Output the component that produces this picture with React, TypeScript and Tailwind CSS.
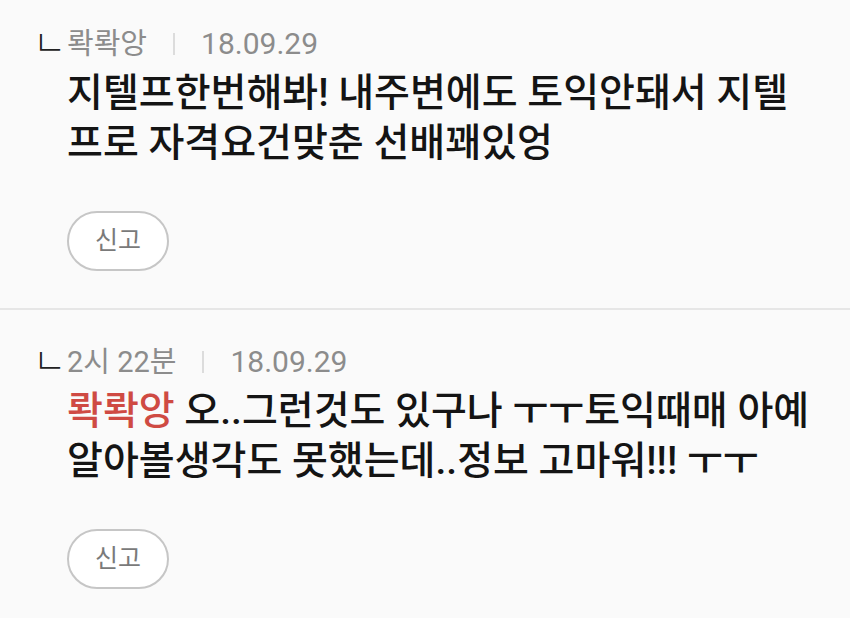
const FONT = { fontFamily: '"Roboto", "Noto Sans CJK KR", sans-serif' };

interface IReply {
  meta: string;
  date: string;
  mention?: string;
  lines: string[];
}

const replies: IReply[] = [
  {
    meta: "롹롹앙",
    date: "18.09.29",
    lines: ["지텔프한번해봐! 내주변에도 토익안돼서 지텔", "프로 자격요건맞춘 선배꽤있엉"],
  },
  {
    meta: "2시 22분",
    date: "18.09.29",
    mention: "롹롹앙",
    lines: ["오..그런것도 있구나 ㅜㅜ토익때매 아예", "알아볼생각도 못했는데..정보 고마워!!! ㅜㅜ"],
  },
];

function Reply({ reply, first }: { reply: IReply; first: boolean }) {
  return (
    <div className={first ? "pt-[26px] pb-[37px]" : "pt-[34px] pb-[26px]"}>
      <div className="flex h-9 items-center text-[29px] leading-9 text-[#8c8c8c]">
        <span className="w-[67px] shrink-0 pl-[33px] text-[36px] font-light leading-none text-[#222]">
          ㄴ
        </span>
        <span>{reply.meta}</span>
        <span className="mx-[26px] h-[22px] w-[2px] bg-[#dcdcdc]" />
        <span className="text-[30px]">{reply.date}</span>
      </div>
      <div className="mt-[6px] pl-[67px] text-[39px] font-medium leading-[50px] text-[#141414]">
        {reply.lines.map((line, i) => (
          <div key={i}>
            {i === 0 && reply.mention && (
              <span className="text-[#cf4a43]">{reply.mention} </span>
            )}
            {line}
          </div>
        ))}
      </div>
      <div className="mt-[43px] pl-[67px]">
        <button className="flex h-[60px] w-[102px] items-center justify-center rounded-full border-2 border-[#c6c6c6] bg-white text-[25px] text-[#7a7a7a]">
          신고
        </button>
      </div>
    </div>
  );
}

export default function App() {
  return (
    <div className="h-[618px] w-[850px] overflow-hidden bg-[#fafafa]" style={FONT}>
      {replies.map((reply, i) => (
        <div key={i}>
          {i > 0 && <div className="h-[2px] bg-[#e6e6e6]" />}
          <Reply reply={reply} first={i === 0} />
        </div>
      ))}
    </div>
  );
}
